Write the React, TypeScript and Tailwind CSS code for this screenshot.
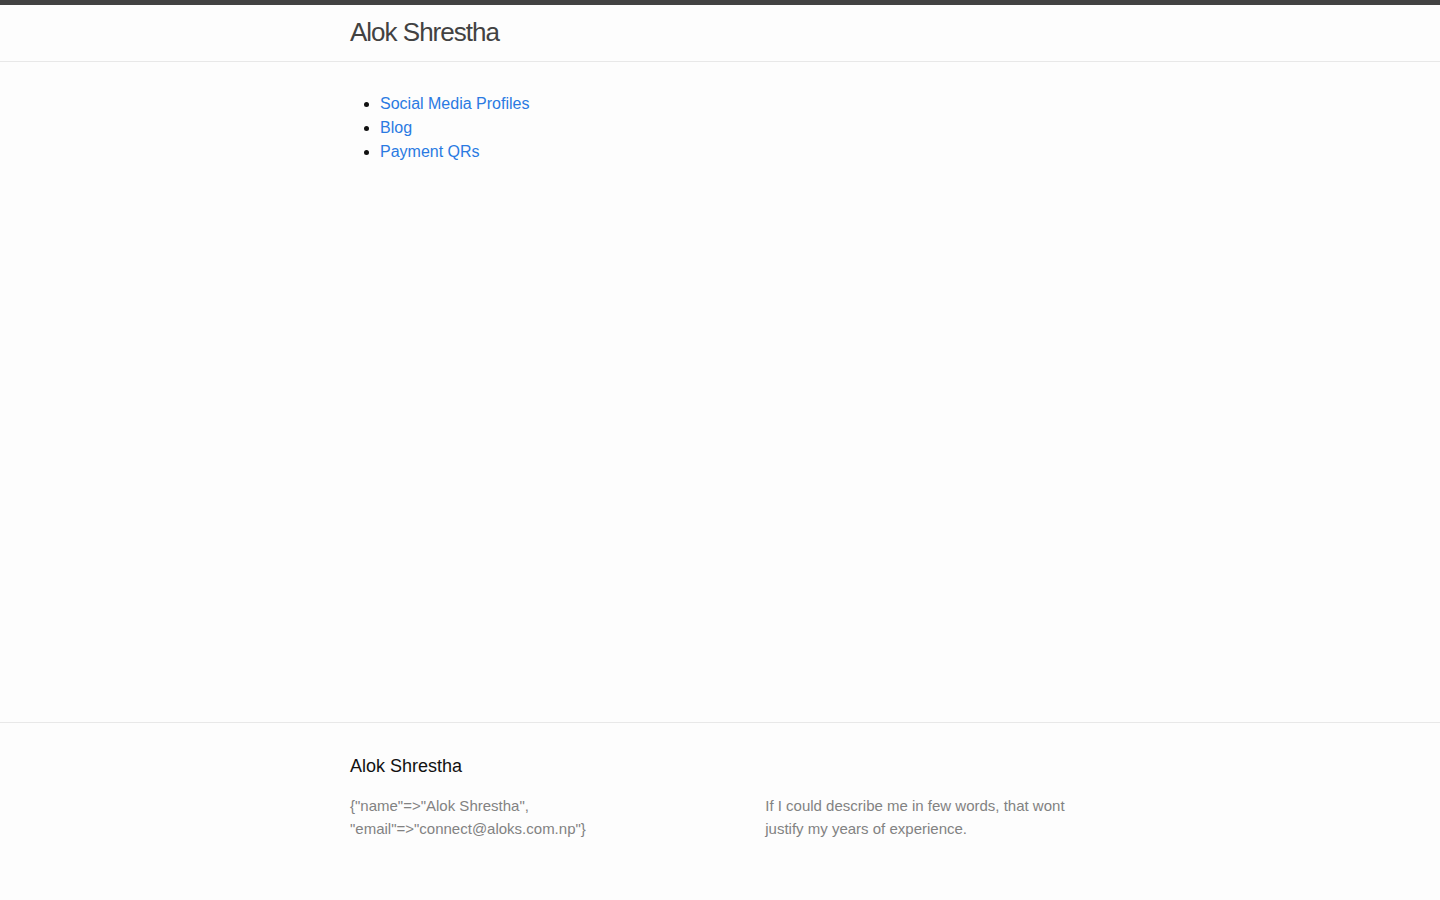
const App = () => {
    return (
        <div className="min-h-screen flex flex-col bg-[#fdfdfd] text-[#111] text-[16px] leading-[1.5] font-['Liberation_Sans',Arial,sans-serif]">
            <header className="border-t-[5px] border-t-[#424242] border-b border-b-[#e8e8e8] min-h-[62px]">
                <div className="max-w-[740px] mx-auto">
                    <a className="text-[26px] font-light leading-[54px] tracking-[-1px] text-[#424242]">Alok Shrestha</a>
                </div>
            </header>
            <main className="flex-1 py-[30px]">
                <div className="max-w-[740px] mx-auto">
                    <ul className="ml-[30px] list-disc">
                        <li><a className="text-[#2a7ae2]">Social Media Profiles</a></li>
                        <li><a className="text-[#2a7ae2]">Blog</a></li>
                        <li><a className="text-[#2a7ae2]">Payment QRs</a></li>
                    </ul>
                </div>
            </main>
            <footer className="border-t border-t-[#e8e8e8] py-[30px]">
                <div className="max-w-[740px] mx-auto">
                    <h2 className="text-[18px] leading-[27px] mb-[15px]">Alok Shrestha</h2>
                    <div className="flex -ml-[15px] text-[15px] leading-[22.5px] text-[#828282]">
                        <div className="w-[35%] pl-[15px] mb-[15px]">
                            <ul className="mb-[15px]">
                                <li>{'{"name"=>"Alok Shrestha", "email"=>"connect@aloks.com.np"}'}</li>
                            </ul>
                        </div>
                        <div className="w-[20%] pl-[15px] mb-[15px]"></div>
                        <div className="w-[45%] pl-[15px] mb-[15px]">
                            <p className="mb-[15px]">If I could describe me in few words, that wont justify my years of experience.</p>
                        </div>
                    </div>
                </div>
            </footer>
        </div>
    )
}

export default App;
